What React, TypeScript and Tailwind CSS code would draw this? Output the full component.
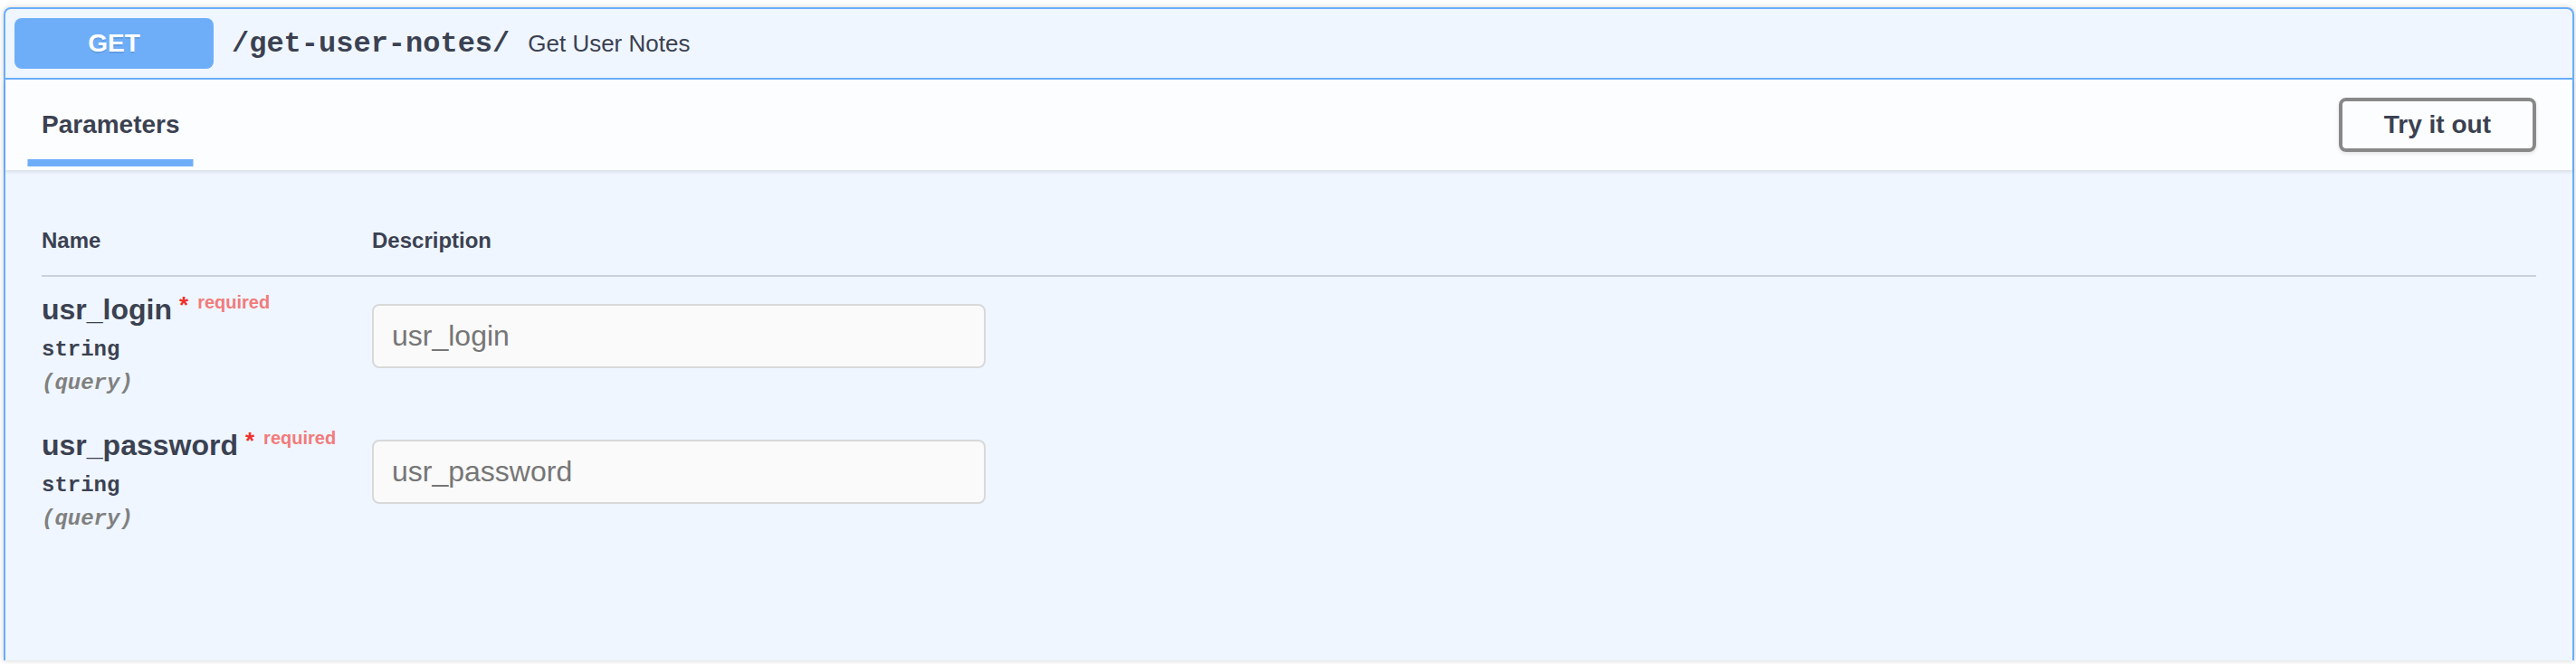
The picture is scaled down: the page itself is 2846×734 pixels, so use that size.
import React from 'react';

const params = [
  { name: 'usr_login', type: 'string', where: 'query' },
  { name: 'usr_password', type: 'string', where: 'query' },
];

const App: React.FC = () => {
  return (
    <div className="h-[734px] w-[2846px] bg-white pt-2 pl-1 pr-[2px] overflow-hidden font-['Liberation_Sans',Arial,sans-serif] text-[#3b4151]">
      <div className="h-[722px] rounded-t-lg border-2 border-b-0 border-[#6aaefa] bg-[#eff6ff] shadow-[0_0_6px_rgba(0,0,0,0.19)]">
        {/* Summary */}
        <div className="flex items-center p-[10px] border-b-2 border-[#6aaefa]">
          <div className="w-[220px] h-[56px] rounded-lg bg-[#6eaef9] flex items-center justify-center text-white text-[28px] leading-[32px] font-bold text-shadow-[0_2px_0_rgba(0,0,0,0.1)]">
            GET
          </div>
          <span className="px-[20px] font-['Liberation_Mono',monospace] font-bold text-[32px] leading-[37px]">
            /get-user-notes/
          </span>
          <span className="text-[26px] leading-[30px]">Get User Notes</span>
        </div>

        {/* Section header */}
        <div className="min-h-[100px] px-10 py-4 flex items-center justify-between bg-white/80 shadow-[0_2px_4px_rgba(0,0,0,0.1)]">
          <h4 className="relative text-[28px] leading-[32px] font-bold">
            Parameters
            <span className="absolute left-1/2 -translate-x-1/2 -bottom-[30px] w-[120%] h-[8px] bg-[#6eaef9]" />
          </h4>
          <button className="border-4 border-[#888888] rounded-lg px-[46px] py-[10px] text-[28px] leading-[32px] font-bold text-[#3b4151] bg-transparent shadow-[0_2px_4px_rgba(0,0,0,0.1)]">
            Try it out
          </button>
        </div>

        {/* Parameters table */}
        <div className="p-10">
          <div className="flex py-6 border-b-2 border-[rgba(59,65,81,0.2)] text-[24px] leading-[28px] font-bold">
            <div className="w-[365px] shrink-0">Name</div>
            <div>Description</div>
          </div>
          {params.map((p) => (
            <div key={p.name} className="flex pt-5 pb-[19px]">
              <div className="w-[365px] shrink-0">
                <div className="text-[32px] leading-[33px] font-bold whitespace-nowrap">
                  {p.name}
                  <span className="relative -top-[7px] ml-[8px] text-[26px] text-[#f0312a]">*</span>
                  <span className="relative -top-[12px] pl-[10px] text-[20px] text-[#f27b7b]">required</span>
                </div>
                <div className="py-[10px] font-['Liberation_Mono',monospace] font-bold text-[24px] leading-[27px]">
                  {p.type}
                </div>
                <div className="font-['Liberation_Mono',monospace] font-bold italic text-[24px] leading-[27px] text-[#808080]">
                  ({p.where})
                </div>
              </div>
              <div>
                <input
                  type="text"
                  placeholder={p.name}
                  className="mt-[10px] w-[678px] h-[71px] px-[20px] border-2 border-[#d9d9d9] rounded-lg bg-[#fafafa] text-[32px] text-[#3b4151] placeholder:text-[#767676] outline-none"
                />
              </div>
            </div>
          ))}
        </div>
      </div>
    </div>
  );
};

export default App;
